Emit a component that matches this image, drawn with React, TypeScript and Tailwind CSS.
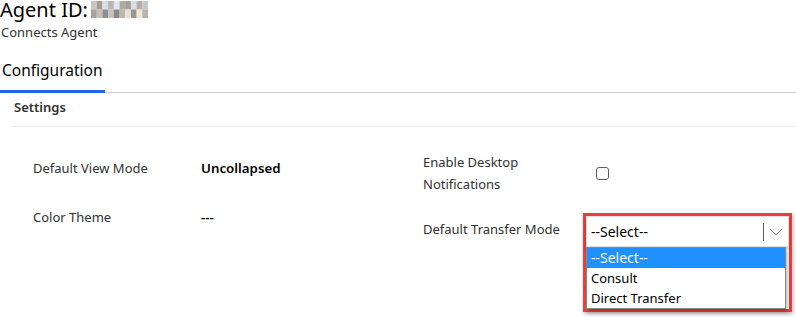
import React from "react"

const font = { fontFamily: '"Segoe UI", "Noto Sans", "Liberation Sans", sans-serif' }

const mosaic = [
  ["#c9c6c2", "#a79c93", "#d9dde4", "#b7b4b2", "#dfe5ee", "#b0aaa6", "#a99e92", "#d5dfe8", "#b5ada3", "#c5c8cc"],
  ["#a8a09c", "#c7bfb8", "#8f8e90", "#c9c3bd", "#8a8886", "#bfb6ad", "#e8e2da", "#9c948f", "#efe6dc", "#b9b2aa"],
]

function BlurredId() {
  return (
    <svg width="57" height="17" viewBox="0 0 57 17" className="ml-[3px] self-start mt-[1px]">
      {mosaic.map((row, r) =>
        row.map((c, i) => <rect key={`${r}-${i}`} x={i * 5.7} y={r * 8.5} width="5.8" height="8.6" fill={c} />)
      )}
    </svg>
  )
}

export default function App() {
  return (
    <div className="w-[796px] h-[317px] bg-white text-[#323130] overflow-hidden relative" style={font}>
      <div className="flex items-start h-[19px]">
        <span className="text-[20px] leading-[20px] text-black">Agent ID:</span>
        <BlurredId />
      </div>
      <div className="text-[13px] leading-[18px] mt-[4px] pl-[1px] text-[#323130]">Connects Agent</div>

      <div className="mt-[14px] flex border-b border-[#d2d0ce]">
        <div className="pl-[2px] pr-[2px] pb-[9px] pt-[4px] text-[15.5px] leading-[22px] text-black border-b-[3px] border-[#2266e3] -mb-px">
          Configuration
        </div>
      </div>

      <div className="ml-[12px] border-b border-[#edebe9] pt-[5px] pb-[10px] pl-[2px] text-[13px] leading-[18px] font-semibold">
        Settings
      </div>

      <div className="grid grid-cols-[390px_1fr] pl-[33px] pt-[31px] text-[13px]">
        <div className="flex flex-col">
          <div className="flex items-center h-[36px] -mt-[7px]">
            <span className="w-[168px] text-[#323130]">Default View Mode</span>
            <span className="font-semibold text-black text-[13.3px]">Uncollapsed</span>
          </div>
          <div className="flex items-center h-[36px] mt-[13px]">
            <span className="w-[168px] text-[#323130]">Color Theme</span>
            <span className="font-semibold text-black text-[13.3px]">---</span>
          </div>
        </div>

        <div className="flex flex-col -mt-[7px]">
          <div className="flex items-center">
            <span className="w-[173px] leading-[22px] text-[#323130]">
              Enable Desktop
              <br />
              Notifications
            </span>
            <span className="w-[13px] h-[13px] border border-[#605e5c] rounded-[3px] bg-white" />
          </div>

          <div className="relative mt-[25px] flex items-center h-[20px]">
            <span className="w-[164px] text-[#323130]">Default Transfer Mode</span>
            <div className="absolute left-[160px] -top-[7px] w-[209px] border-[3px] border-[#e8403f] bg-white shadow-[1px_2px_4px_rgba(0,0,0,0.3)]">
              <div className="h-[31px] flex items-center bg-white shadow-[0_2px_3px_rgba(0,0,0,0.25)] border border-[#e1dfdd]">
                <span className="flex-1 pl-[4px] text-[14px] text-black">--Select--</span>
                <span className="w-px h-[18px] bg-[#605e5c]" />
                <svg width="22" height="14" viewBox="0 0 22 14" className="mx-[1px]">
                  <path d="M5 4l6 6 6-6" fill="none" stroke="#8a8886" strokeWidth="1" />
                </svg>
              </div>
              <div className="mr-[3px] border border-[#8a8886] shadow-[2px_3px_4px_rgba(0,0,0,0.25)] text-[13px] text-black">
                <div className="h-[20px] leading-[20px] px-[4px] bg-[#1e90ff] text-white text-[14px]">--Select--</div>
                <div className="h-[20px] leading-[20px] px-[4px]">Consult</div>
                <div className="h-[20px] leading-[20px] px-[4px]">Direct Transfer</div>
              </div>
            </div>
          </div>
        </div>
      </div>
    </div>
  )
}
